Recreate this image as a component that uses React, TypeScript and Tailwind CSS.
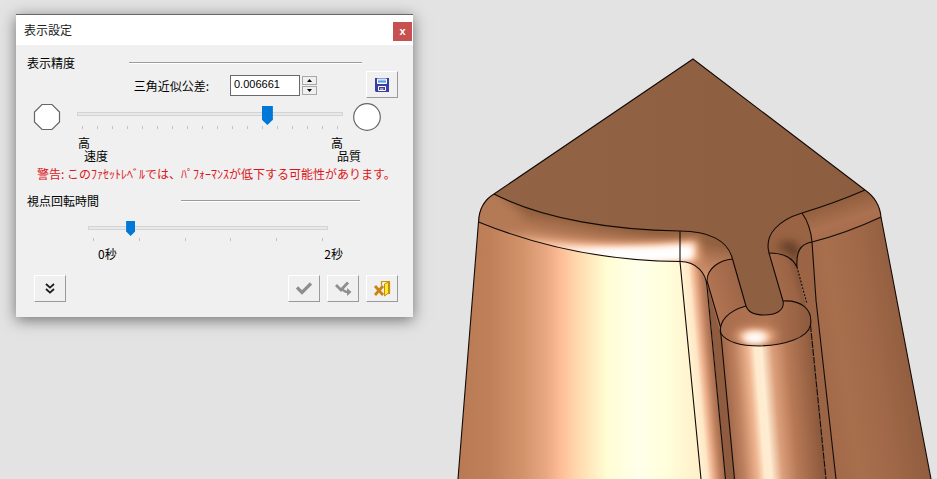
import React, { useState } from 'react';

const toolButton =
  'flex h-[27px] w-8 items-center justify-center border border-t-white border-l-white border-r-[#9a9a9a] border-b-[#9a9a9a] bg-[#f0f0f0] active:bg-[#e4e4e4]';

function Heading({ children }: { children: React.ReactNode }) {
  return <h2 className="w-[102px] shrink-0 leading-4">{children}</h2>;
}

function Ticks({ count }: { count: number }) {
  return (
    <div className="flex h-[3px] justify-between px-[5px]" aria-hidden="true">
      {Array.from({ length: count }, (_, i) => (
        <span key={i} className="h-full w-px bg-[#c4c4c4]" />
      ))}
    </div>
  );
}

function SaveIcon() {
  return (
    <svg width="14" height="14" viewBox="0 0 14 14" aria-hidden="true">
      <path d="M0 0h14v14H1L0 13z" fill="#3d3f9e" />
      <path d="M2.500 1h9v4.500h-9z" fill="#8fc4f4" stroke="#fff" />
      <path d="M3 3.500h8" stroke="#5b9be0" />
      <path d="M3.500 8.500h7v4h-7z" fill="#3d3f9e" stroke="#fff" />
      <path d="M5 11h3.500" stroke="#fff" />
    </svg>
  );
}

function ExpandIcon() {
  return (
    <svg width="10" height="11" viewBox="0 0 10 11" fill="none" stroke="#1c1c24" strokeWidth="1.800" aria-hidden="true">
      <path d="M1 1l4 3.600L9 1M1 6l4 3.600L9 6" />
    </svg>
  );
}

function CheckIcon() {
  return (
    <svg width="16" height="13" viewBox="0 0 16 13" fill="none" stroke="#8e8e8e" strokeWidth="3.200" aria-hidden="true">
      <path d="M1 5.500l5 5L15 1.500" />
    </svg>
  );
}

function CheckNextIcon() {
  return (
    <svg width="17" height="15" viewBox="0 0 17 15" fill="none" stroke="#8e8e8e" aria-hidden="true">
      <path d="M1 4l5 5L13 1.500" strokeWidth="2.800" />
      <path d="M7 7c1 2.500 2.500 4 6 4" strokeWidth="2.200" />
      <path d="M12 7l4.500 4-4.500 4z" fill="#8e8e8e" stroke="none" />
    </svg>
  );
}

function ExitIcon() {
  return (
    <svg width="17" height="17" viewBox="0 0 17 17" fill="none" aria-hidden="true">
      <path d="M7.500 5.500V1.500h8v12h-4" stroke="#c8900c" strokeWidth="1.200" />
      <path d="M10.500 4l4-2v11l-4 3z" fill="#ffe83a" stroke="#c89000" />
      <path d="M1 6l8 9M9 6l-8 9" stroke="#cc8210" strokeWidth="2.800" />
    </svg>
  );
}

function SettingsDialog() {
  const [quality, setQuality] = useState(72.5);
  const [seconds, setSeconds] = useState(0.33);
  const [tolerance, setTolerance] = useState('0.006661');
  const nudge = (d: number) => setTolerance((Number(tolerance) + d).toFixed(6));

  return (
    <section
      aria-label="表示設定"
      className="border-t border-[#666] bg-[#f0f0f0] shadow-[0_3px_14px_rgba(0,0,0,0.5)]"
    >
      <header className="flex h-[30px] items-center justify-between bg-white pr-px pl-2">
        <h1 className="text-[#222]">表示設定</h1>
        <button
          type="button"
          aria-label="閉じる"
          className="mt-[3px] flex size-[19px] items-center justify-center bg-[#c75050] font-['Liberation_Sans',sans-serif] text-[11px] leading-none font-bold text-white"
        >
          x
        </button>
      </header>

      <div className="px-[11px] pt-[10px] pb-[15px]">
        <div className="flex items-center pr-10">
          <Heading>表示精度</Heading>
          <div className="h-[2px] flex-1 border-t border-[#9c9c9c] bg-white" />
        </div>

        <div className="flex h-[29px] items-center justify-end pr-1">
          <label htmlFor="tolerance" className="mr-[21px]">三角近似公差:</label>
          <input
            id="tolerance"
            value={tolerance}
            onChange={(e) => setTolerance(e.target.value)}
            className="h-[21px] w-[70px] border border-[#6a6a6a] bg-white px-[3px] pb-[3px] font-['Liberation_Sans','Noto_Sans_CJK_JP',sans-serif] text-[11px] outline-none"
          />
          <div className="mr-[49px] ml-[2px] flex flex-col gap-px">
            <button type="button" aria-label="増やす" onClick={() => nudge(0.000001)} className="flex h-[9px] w-[15px] items-center justify-center border border-[#a8a8a8]">
              <svg width="5" height="3" viewBox="0 0 5 3" aria-hidden="true"><path d="M0 3L2.500 0 5 3z" /></svg>
            </button>
            <button type="button" aria-label="減らす" onClick={() => nudge(-0.000001)} className="flex h-[9px] w-[15px] items-center justify-center border border-[#a8a8a8]">
              <svg width="5" height="3" viewBox="0 0 5 3" aria-hidden="true"><path d="M0 0L2.500 3 5 0z" /></svg>
            </button>
          </div>
          <button type="button" aria-label="保存" className={toolButton + ' self-start'}><SaveIcon /></button>
        </div>

        <div className="mt-[3px] flex items-start pr-[21px] pl-[6px]">
          <svg width="28" height="28" viewBox="0 0 28 28" aria-hidden="true">
            <path d="M9 1.500h10l7.500 7.500v10L19 26.500H9L1.500 19V9z" fill="#fff" stroke="#666" strokeWidth="1.200" />
          </svg>
          <div className="mr-[10px] ml-4 flex-1">
            <input
              type="range"
              aria-label="表示精度"
              min="0"
              max="100"
              step="0.5"
              value={quality}
              onChange={(e) => setQuality(Number(e.target.value))}
              className="block h-[22px] w-full appearance-none bg-transparent [&::-webkit-slider-runnable-track]:h-1 [&::-webkit-slider-runnable-track]:bg-[#e7e9e9] [&::-webkit-slider-runnable-track]:shadow-[inset_0_0_0_1px_#d4d4d4] [&::-webkit-slider-thumb]:mt-[-6px] [&::-webkit-slider-thumb]:h-[19px] [&::-webkit-slider-thumb]:w-[11px] [&::-webkit-slider-thumb]:appearance-none [&::-webkit-slider-thumb]:bg-[#0078d7] [&::-webkit-slider-thumb]:[clip-path:polygon(0_0,100%_0,100%_72%,50%_100%,0_72%)]"
            />
            <div className="mt-px"><Ticks count={18} /></div>
          </div>
          <svg width="28" height="28" viewBox="0 0 28 28" aria-hidden="true">
            <circle cx="14" cy="14" r="13.300" fill="#fff" stroke="#666" strokeWidth="1.200" />
          </svg>
        </div>

        <div className="mt-[5px] flex justify-between pr-[41px] pl-[51px] leading-[13px]">
          <div>
            <p>高</p>
            <p className="pl-[6px]">速度</p>
          </div>
          <div>
            <p>高</p>
            <p className="pl-[6px]">品質</p>
          </div>
        </div>

        <p className="mt-1 pl-[10px] leading-4 whitespace-nowrap text-[#dc1420]">
          警告: このﾌｧｾｯﾄﾚﾍﾞﾙでは、ﾊﾟﾌｫｰﾏﾝｽが低下する可能性があります。
        </p>

        <div className="mt-[11px] flex items-center pr-[42px]">
          <Heading>視点回転時間</Heading>
          <div className="ml-[52px] h-[2px] flex-1 border-t border-[#9c9c9c] bg-white" />
        </div>

        <div className="mt-[11px] pr-[74px] pl-[61px]">
          <input
            type="range"
            aria-label="視点回転時間"
            min="0"
            max="2"
            step="0.01"
            value={seconds}
            onChange={(e) => setSeconds(Number(e.target.value))}
            className="block h-4 w-full appearance-none bg-transparent [&::-webkit-slider-runnable-track]:h-1 [&::-webkit-slider-runnable-track]:bg-[#e7e9e9] [&::-webkit-slider-runnable-track]:shadow-[inset_0_0_0_1px_#d4d4d4] [&::-webkit-slider-thumb]:mt-[-5px] [&::-webkit-slider-thumb]:h-[15px] [&::-webkit-slider-thumb]:w-[9px] [&::-webkit-slider-thumb]:appearance-none [&::-webkit-slider-thumb]:bg-[#0078d7] [&::-webkit-slider-thumb]:[clip-path:polygon(0_0,100%_0,100%_70%,50%_100%,0_70%)]"
          />
          <div className="mt-[2px]"><Ticks count={6} /></div>
        </div>

        <div className="mt-[5px] flex justify-between pr-[59px] pl-[71px] leading-4">
          <span>0秒</span>
          <span>2秒</span>
        </div>

        <div className="mt-[13px] flex gap-[7px] pr-1 pl-[7px]">
          <button type="button" aria-label="詳細" className={toolButton + ' mr-auto'}><ExpandIcon /></button>
          <button type="button" aria-label="OK" className={toolButton}><CheckIcon /></button>
          <button type="button" aria-label="適用" className={toolButton}><CheckNextIcon /></button>
          <button type="button" aria-label="終了" className={toolButton}><ExitIcon /></button>
        </div>
      </div>
    </section>
  );
}

const rim = 'M494 194C545 220 615 230 680 231';
const lowerRim = 'M478.500 222C540 247 610 261 680 261.500';
const band = 'M494 194C545 220 615 230 680 231C708 231 728 240 732.500 259C720 260 707 268 707 283C704 272 695 262 680 261.500C610 261 540 247 478.500 222C479 209 484 200 494 194z';
const pinTop = 'M746 306C728 311 719 321 720.500 333C727 343 744 346 760 346C785 345 808 338 810.500 325C813 309 801 300 783 301C783 311 775 315 764 315C753 315 748 312 746 306z';

function Model() {
  return (
    <svg
      role="img"
      aria-label="3D モデル"
      className="h-full min-w-0 flex-1"
      viewBox="450 0 487 479"
      preserveAspectRatio="xMidYMax slice"
    >
      <defs>
        <linearGradient id="top" gradientUnits="userSpaceOnUse" x1="494" y1="0" x2="865" y2="0">
          <stop offset="0" stopColor="#936345" /><stop offset="1" stopColor="#8d5d40" />
        </linearGradient>
        <linearGradient id="front" gradientUnits="userSpaceOnUse" x1="458" y1="0" x2="701" y2="0">
          <stop offset="0" stopColor="#b87a54" /><stop offset=".13" stopColor="#bf8059" />
          <stop offset=".27" stopColor="#d3946c" /><stop offset=".36" stopColor="#e8a781" />
          <stop offset=".42" stopColor="#fdbc96" /><stop offset=".49" stopColor="#ffd8ad" />
          <stop offset=".61" stopColor="#fffdd2" /><stop offset=".74" stopColor="#ffffeb" />
          <stop offset=".85" stopColor="#ffffdc" /><stop offset="1" stopColor="#ffefc8" />
        </linearGradient>
        <linearGradient id="edge" gradientUnits="userSpaceOnUse" x1="691" y1="380" x2="717" y2="377.600">
          <stop offset="0" stopColor="#fff5d2" /><stop offset=".3" stopColor="#ffe6c6" />
          <stop offset=".52" stopColor="#ecb08c" /><stop offset=".75" stopColor="#c08260" /><stop offset="1" stopColor="#9c6446" />
        </linearGradient>
        <linearGradient id="pin" gradientUnits="userSpaceOnUse" x1="727" y1="400" x2="818" y2="392.600">
          <stop offset="0" stopColor="#a0684a" /><stop offset=".13" stopColor="#c08260" />
          <stop offset=".27" stopColor="#efb490" /><stop offset=".35" stopColor="#ffecce" />
          <stop offset=".42" stopColor="#ffecd2" /><stop offset=".54" stopColor="#dc9f7b" />
          <stop offset=".7" stopColor="#b87a57" /><stop offset="1" stopColor="#8b583b" />
        </linearGradient>
        <linearGradient id="side" gradientUnits="userSpaceOnUse" x1="815" y1="380" x2="915" y2="365">
          <stop offset="0" stopColor="#a06848" /><stop offset=".3" stopColor="#a86f4d" />
          <stop offset=".6" stopColor="#a16948" /><stop offset="1" stopColor="#905d3f" />
        </linearGradient>
        <linearGradient id="sideRim" gradientUnits="userSpaceOnUse" x1="835" y1="203" x2="845" y2="234">
          <stop offset="0" stopColor="#93603f" /><stop offset=".6" stopColor="#ab7150" /><stop offset="1" stopColor="#a66c4b" />
        </linearGradient>
        <linearGradient id="bandFill" gradientUnits="userSpaceOnUse" x1="600" y1="224" x2="594" y2="258">
          <stop offset="0" stopColor="#93613f" /><stop offset=".45" stopColor="#b57957" /><stop offset="1" stopColor="#d39671" />
        </linearGradient>
        <linearGradient id="wall" gradientUnits="userSpaceOnUse" x1="710" y1="290" x2="743" y2="280">
          <stop offset="0" stopColor="#b17453" /><stop offset="1" stopColor="#9b6445" />
        </linearGradient>
        <linearGradient id="wallRight" gradientUnits="userSpaceOnUse" x1="775" y1="285" x2="803" y2="277">
          <stop offset="0" stopColor="#a66c4b" /><stop offset=".6" stopColor="#9b6445" /><stop offset="1" stopColor="#7d5037" />
        </linearGradient>
        <linearGradient id="pinCap" gradientUnits="userSpaceOnUse" x1="722" y1="320" x2="811" y2="320">
          <stop offset="0" stopColor="#a96e4e" /><stop offset=".5" stopColor="#b27553" /><stop offset="1" stopColor="#8d5a3d" />
        </linearGradient>
        <filter id="soft3" x="-40%" y="-80%" width="180%" height="260%"><feGaussianBlur stdDeviation="3" /></filter>
        <filter id="soft5" x="-60%" y="-80%" width="220%" height="260%"><feGaussianBlur stdDeviation="5" /></filter>
        <clipPath id="bandClip"><path d={band} /></clipPath>
        <clipPath id="capClip"><path d={pinTop} /></clipPath>
        <clipPath id="cornerClip"><path d="M802 213C779 220 764 234 769 253C783 253 793 258 797 267C796 252 800 244 812 242C811 230 807 220 802 213z" /></clipPath>
      </defs>

      <path d="M494 194L693 59L865 190L840 215L783 320H740L700 262L494 215z" fill="url(#top)" />
      <path d="M478.500 222C540 247 610 261 680 261.500L701 479H458z" fill="url(#front)" />
      <path d="M680 261.500C697 262 706 273 707 286L725.500 479H701z" fill="url(#edge)" />
      <path d="M707 281L721 325L734.500 479H725.500z" fill="#8f5c3f" />
      <path d="M707 283C707 268 720 260 732.500 259L746 306C728 311 719 321 720.500 333z" fill="url(#wall)" />

      <path d={band} fill="url(#bandFill)" />
      <g clipPath="url(#bandClip)">
        <path d="M470 190V240L530 250L520 212L496 190z" fill="#b47954" filter="url(#soft5)" />
        <path d="M500 234C560 243 620 247 698 239L700 262L640 264C590 262 540 252 500 234z" fill="#f3b38c" filter="url(#soft5)" />
        <path d="M528 243C580 246 620 249 694 243L694 259L640 262C600 261 560 254 528 243z" fill="#ffd9bf" filter="url(#soft3)" />
        <path d="M560 249C600 249 640 250 692 246L692 258L640 261C610 260 585 257 560 249z" fill="#fff" filter="url(#soft3)" />
        <path d="M590 251C620 251 650 251 689 248L689 257L640 259C620 259 605 257 590 251z" fill="#fff" filter="url(#soft3)" />
      </g>

      <path d="M769 253C783 253 793 258 797 267L811 325C813 309 801 300 783 301z" fill="url(#wallRight)" />
      <path d="M797 267C796 252 800 244 812 242L816 300L836 479H826L810.500 325z" fill="#9b6445" />
      <path d="M802 213C779 220 764 234 769 253C783 253 793 258 797 267C796 252 800 244 812 242C811 230 807 220 802 213z" fill="#9a6444" />
      <g clipPath="url(#cornerClip)">
        <path d="M774 247C787 250 794 255 797 267L800 248L790 240z" fill="#5e3b27" filter="url(#soft5)" />
      </g>
      <path d="M802 213Q835 203 865 190C875 197 880 206 881 217Q847 233 812 242C811 230 807 220 802 213z" fill="url(#sideRim)" />
      <path d="M812 242Q847 233 881 217L931 479H836L816 300z" fill="url(#side)" />

      <path d="M720.500 333C727 343 744 346 760 346C785 345 808 338 810.500 325L826 479H734.500z" fill="url(#pin)" />
      <path d={pinTop} fill="url(#pinCap)" />
      <g clipPath="url(#capClip)">
        <ellipse cx="756" cy="336" rx="21" ry="8" fill="#eaa983" filter="url(#soft5)" />
        <ellipse cx="755" cy="337" rx="14" ry="6" fill="#ffdcc2" filter="url(#soft3)" />
        <ellipse cx="755" cy="338" rx="10" ry="5" fill="#fff" filter="url(#soft3)" />
      </g>

      <g fill="none" stroke="#120a06" strokeWidth="1.100">
        <path d="M458 479L478.500 222C479 209 484 200 494 194L693 59L865 190C875 197 880 206 881 217L931 479" />
        <path d={rim} />
        <path d={lowerRim} />
        <path d="M680 231V261.500L701 479" />
        <path d="M680 231C708 231 728 240 732.500 259L746 306C748 312 753 315 764 315C775 315 785 311 783 301L769 253C764 234 779 220 802 213Q835 203 865 190" />
        <path d="M680 261.500C697 262 706 273 707 286L725.500 479" />
        <path d="M732.500 259C720 260 707 268 707 281L720.500 327" />
        <path d="M746 306C728 311 719 321 720.500 333C727 343 744 346 760 346C785 345 808 338 810.500 325C813 309 801 300 783 301" />
        <path d="M720.500 330L734.500 479" />
        <path d="M810.500 325L826 479" strokeDasharray="7 1" />
        <path d="M769 253C783 253 793 258 797 267C796 252 800 244 812 242Q847 233 881 217" />
        <path d="M797 267L807 304" strokeDasharray="2 1.500" />
        <path d="M802 213C807 220 811 230 812 242L816 300L836 479" />
      </g>
    </svg>
  );
}

export default function App() {
  return (
    <main className="flex h-screen overflow-hidden bg-[#e3e3e3] font-['Noto_Sans_CJK_JP','Liberation_Sans',sans-serif] text-xs text-black">
      <div className="w-[450px] shrink-0 pt-[14px] pr-[37px] pl-4">
        <SettingsDialog />
      </div>
      <Model />
    </main>
  );
}
